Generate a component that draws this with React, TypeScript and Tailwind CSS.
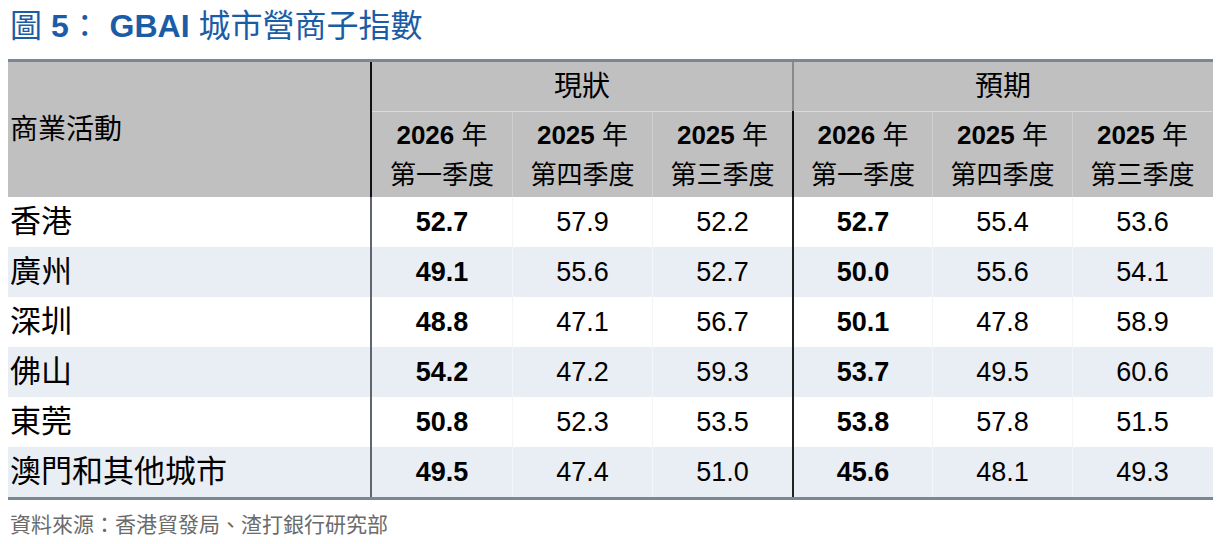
const cols = [
  { year: "2026", q: "第一季度" },
  { year: "2025", q: "第四季度" },
  { year: "2025", q: "第三季度" },
];

const rows: { city: string; now: string[]; exp: string[] }[] = [
  { city: "香港", now: ["52.7", "57.9", "52.2"], exp: ["52.7", "55.4", "53.6"] },
  { city: "廣州", now: ["49.1", "55.6", "52.7"], exp: ["50.0", "55.6", "54.1"] },
  { city: "深圳", now: ["48.8", "47.1", "56.7"], exp: ["50.1", "47.8", "58.9"] },
  { city: "佛山", now: ["54.2", "47.2", "59.3"], exp: ["53.7", "49.5", "60.6"] },
  { city: "東莞", now: ["50.8", "52.3", "53.5"], exp: ["53.8", "57.8", "51.5"] },
  { city: "澳門和其他城市", now: ["49.5", "47.4", "51.0"], exp: ["45.6", "48.1", "49.3"] },
];

function SubHead({ year, q, first }: { year: string; q: string; first?: boolean }) {
  return (
    <div
      className={`flex flex-col items-center justify-center border-t border-[#dadada] text-black ${
        first ? "" : "border-l border-l-[#cfcfcf]"
      }`}
    >
      <div className="text-[26px] leading-[40px]">
        <span className="font-bold">{year}</span> 年
      </div>
      <div className="text-[26px] leading-[40px]">{q}</div>
    </div>
  );
}

export default function App() {
  return (
    <div className="h-[544px] w-[1228px] bg-white font-['Liberation_Sans','Noto_Sans_CJK_TC',sans-serif] text-black">
      <h1 className="h-[59px] pl-[10px] pt-[7px] text-[32px] leading-[38px] text-[#1b5ca7]">
        圖 <span className="font-bold">5</span>： <span className="font-bold">GBAI</span> 城市營商子指數
      </h1>

      <div className="ml-[8px] w-[1205px] border-y-[3px] border-[#7b8794]">
        <div className="grid grid-cols-[364px_140px_140px_140px_140px_140px_140px] grid-rows-[49px_86px] bg-[#c0c0c0]">
          <div className="row-span-2 flex items-center border-r-2 border-[#111] pl-[2px] text-[28px]">商業活動</div>
          <div className="col-span-3 flex items-center justify-center text-[28px]">現狀</div>
          <div className="col-span-3 flex items-center justify-center border-l-2 border-[#8a8a8a] text-[28px]">預期</div>
          {cols.map((c, i) => (
            <SubHead key={"n" + i} year={c.year} q={c.q} first={i === 0} />
          ))}
          {cols.map((c, i) => (
            <div key={"e" + i} className={i === 0 ? "grid border-l-2 border-[#111]" : "grid"}>
              <SubHead year={c.year} q={c.q} first={i === 0} />
            </div>
          ))}
        </div>

        {rows.map((r, ri) => (
          <div
            key={r.city}
            className={`grid h-[50px] grid-cols-[364px_140px_140px_140px_140px_140px_140px] text-[27px] ${
              ri % 2 === 1 ? "bg-[#e9eef5]" : "bg-white"
            }`}
          >
            <div className="flex items-center border-r-2 border-[#5f6670] pl-[2px] text-[31px]">{r.city}</div>
            {r.now.map((v, i) => (
              <div
                key={"n" + i}
                className={`flex items-center justify-center ${i === 0 ? "font-bold" : "border-l border-[#f3f5f9]"}`}
              >
                {v}
              </div>
            ))}
            {r.exp.map((v, i) => (
              <div
                key={"e" + i}
                className={`flex items-center justify-center ${
                  i === 0 ? "border-l-2 border-[#222] font-bold" : "border-l border-[#f3f5f9]"
                }`}
              >
                {v}
              </div>
            ))}
          </div>
        ))}
      </div>

      <p className="pl-[10px] pt-[11px] text-[21px] leading-[28px] text-[#6b6b6b]">資料來源：香港貿發局、渣打銀行研究部</p>
    </div>
  );
}
